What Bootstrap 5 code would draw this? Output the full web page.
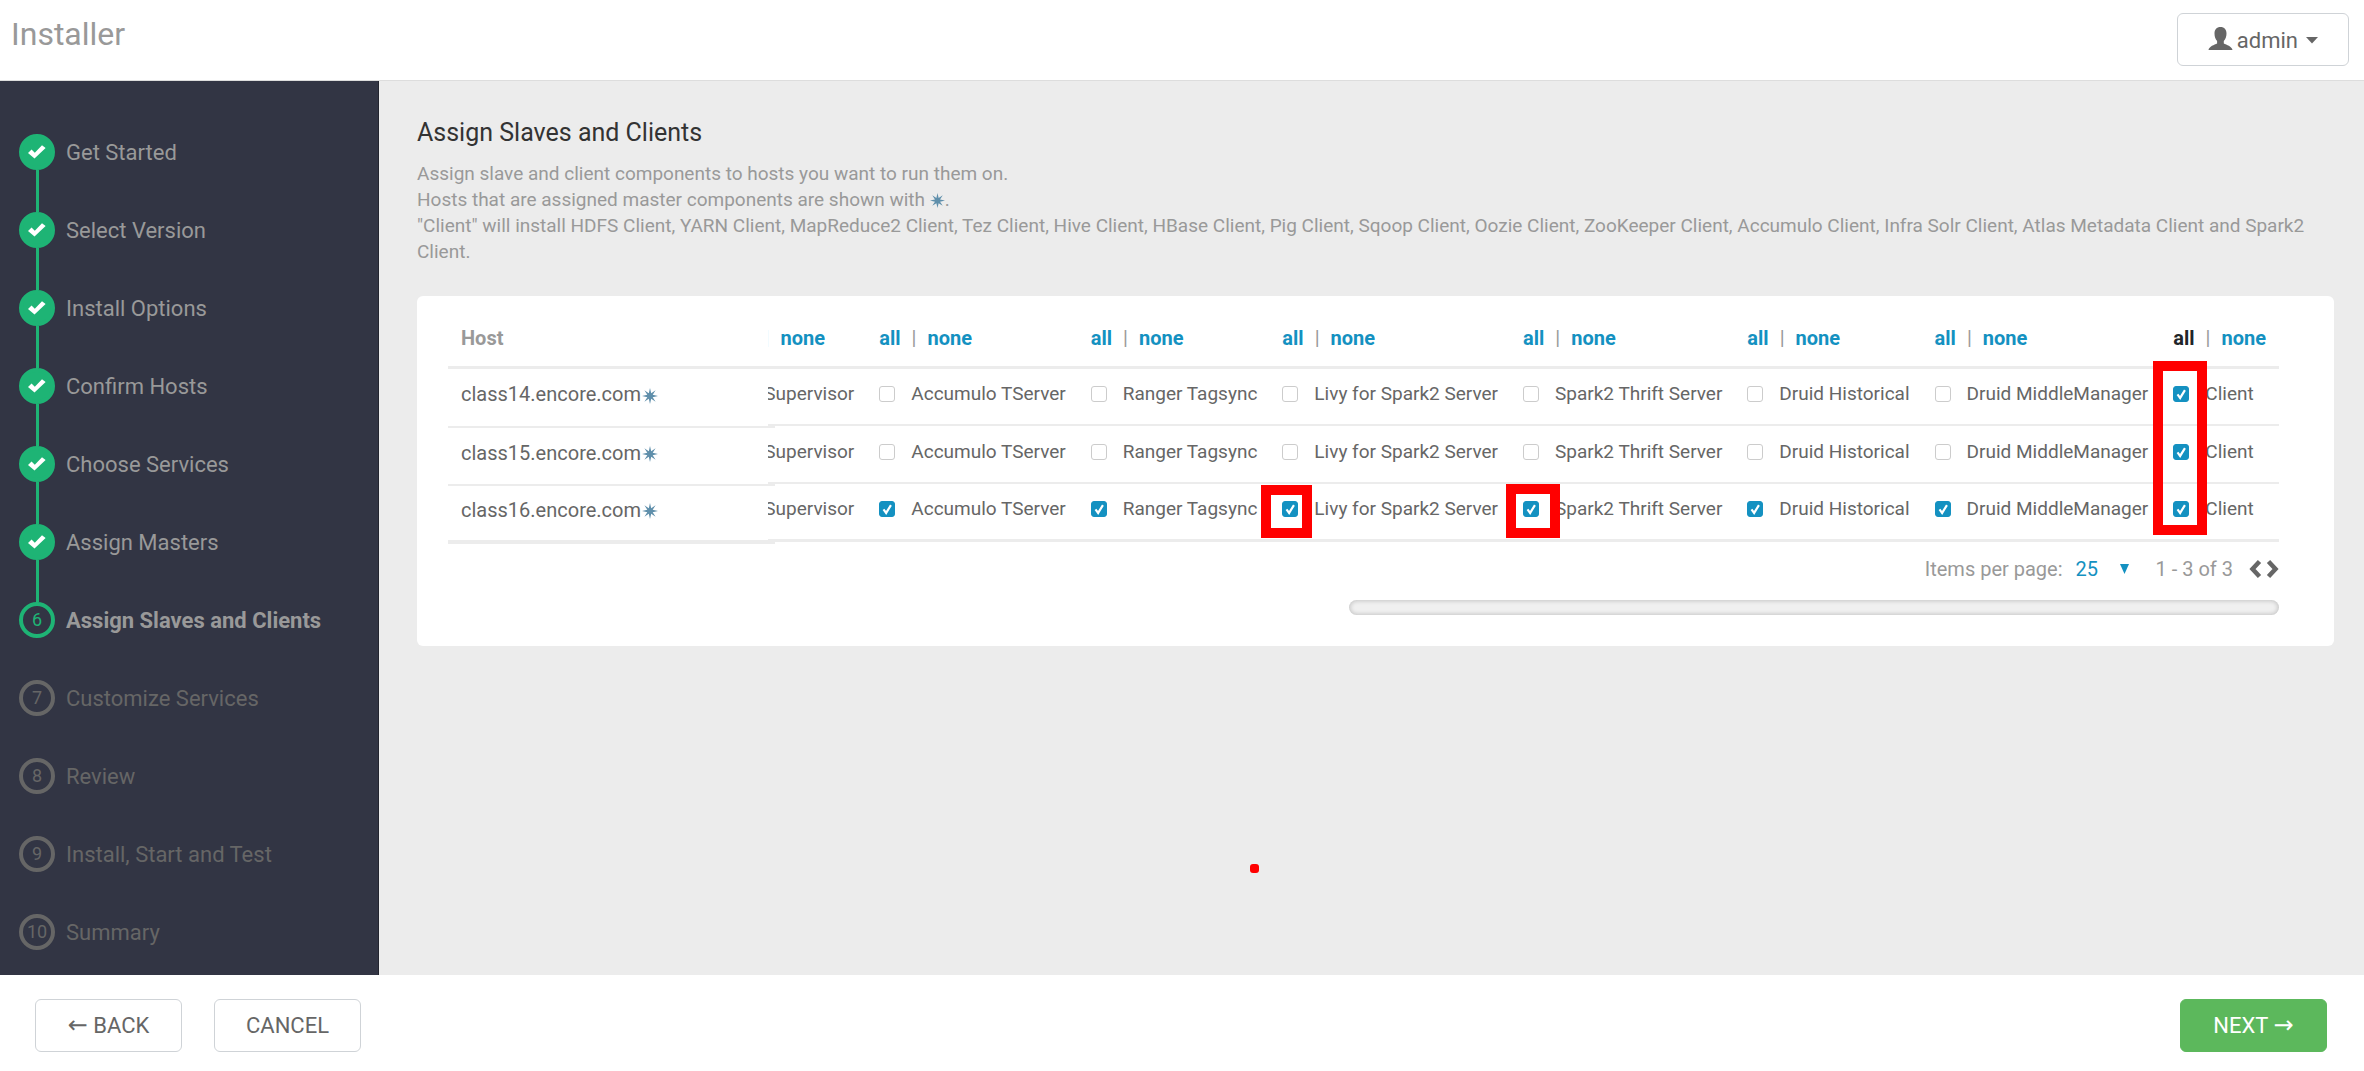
<!DOCTYPE html>
<html lang="en">
<head>
<meta charset="utf-8">
<meta name="viewport" content="width=device-width, initial-scale=1">
<title>Installer</title>
<link rel="stylesheet" href="https://cdn.jsdelivr.net/npm/bootstrap@5.3.0/dist/css/bootstrap.min.css">
<style>
  body { font-family: Roboto, "Liberation Sans", sans-serif; font-size: 19px; line-height: 26px; color: #666; background: #ececec; }
  a { color: #1491c1; text-decoration: none; }
  .topbar { min-height: 81px; background: #fff; border-bottom: 1px solid #ddd; padding: 13px 15px 0 11px; }
  .brand-title { font-size: 32px; line-height: 42px; font-weight: 400; color: #999; }
  .btn-tool { --bs-btn-font-size: 22px; --bs-btn-line-height: 30px; --bs-btn-border-radius: 6px; --bs-btn-border-color: #cfd3d7;
    --bs-btn-color: #666; --bs-btn-bg: #fff; --bs-btn-padding-x: 30px; height: 53px; min-width: 147px; }
  .btn-user { padding-top: 8px; }
  .btn-go { --bs-btn-color: #fff; --bs-btn-bg: #5cb85c; --bs-btn-border-color: #5cb85c; }
  .arrow { font-family: "DejaVu Sans", sans-serif; font-size: 24px; line-height: 1; }
  .sidebar { width: 379px; background: #323544; border-right: 1px solid #23252f; padding: 53px 0 23px 19px; }
  .step { height: 78px; gap: 11px; font-size: 22px; line-height: 38px; color: #666; }
  .step:last-child { height: auto; }
  .step a, .step.current { color: #999; }
  .bullet { width: 36px; height: 36px; flex: none; border: 4px solid #666; border-radius: 50%; font-size: 18px; color: #666; }
  .current .bullet { border-color: #1eb475; color: #1eb475; }
  .done .bullet { border-color: #1eb475; background: #1eb475; }
  .rail { width: 3px; flex: 1; background: #1eb475; }
  .content-area { padding: 37px 30px 36px 38px; min-width: 0; }
  .page-title { font-size: 25px; line-height: 30px; font-weight: 400; color: #333; margin-bottom: 13px; }
  .intro { color: #999; margin-bottom: 31px; }
  .panel { background: #fff; border-radius: 6px; padding: 12px 55px 31px 31px; }
  .grid-table { border-collapse: separate; border-spacing: 0; white-space: nowrap; }
  .grid-table th { height: 61px; padding: 2px 13px 0 12px; border-bottom: 3px solid #ececec; color: #999; font-size: 20px; text-align: left; }
  .grid-table td { height: 58px; padding: 0 13px 5px 12px; border-bottom: 2px solid #ececec; }
  .grid-table tr:first-child td { height: 57px; }
  .grid-table tr:last-child td { border-bottom-width: 3px; }
  .grid-table.hosts { width: 327px; margin-right: -7px; z-index: 1; }
  .grid-table.hosts th, .grid-table.hosts td { padding-left: 13px; }
  .grid-table.hosts td { font-size: 20px; padding-bottom: 7px; }
  .grid-table.hosts tr:first-child td { height: 59px; }
  .grid-table.hosts tr:last-child td { border-bottom-width: 4px; }
  .bar { font-weight: 400; margin: 0 11px; }
  .form-check-input.tick { width: 16px; height: 16px; margin: 0; border: 1px solid #ccc; border-radius: 3px; flex: none; }
  .form-check-input.tick:checked { background-color: #1491c1; border-color: #1491c1;
    background-image: url("data:image/svg+xml,%3Csvg xmlns='http://www.w3.org/2000/svg' viewBox='0 0 16 16'%3E%3Cpath d='M4 8.500l3 4L12.500 3.500' fill='none' stroke='%23fff' stroke-width='2.500'/%3E%3C/svg%3E"); }
  .tick-label { gap: 16px; }
  .pager { height: 49px; margin-bottom: 7px; color: #999; font-size: 20px; }
  .pager-size { appearance: none; border: 0; color: #1491c1; padding: 0; width: 53px; margin: 0 27px 0 13px;
    background: url("data:image/svg+xml,%3Csvg xmlns='http://www.w3.org/2000/svg' width='9' height='10'%3E%3Cpath d='M0 0h9l-4.500 10z' fill='%231491c1'/%3E%3C/svg%3E") no-repeat right center; }
  .pager-step { border: 0; background: none; padding: 0; line-height: 0; }
  .thumb { height: 15px; width: 50.8%; border-radius: 8px; background: #f0f0f0; box-shadow: inset 0 0 4px 1px rgba(0,0,0,.18); }
  .marker { position: absolute; z-index: 2; border: 10px solid #f00; pointer-events: none; }
  .marker-livy { left: -21px; top: -11px; width: 51px; height: 53px; }
  .marker-thrift { left: -17px; top: -12px; width: 54px; height: 54px; }
  .marker-client { left: -20px; top: -20px; width: 54px; height: 174px; }
  .dot { position: absolute; left: 1250px; top: 864px; width: 9px; height: 9px; border-radius: 3px; background: #f00; }
  .footer-bar { height: 96px; background: #fff; padding: 24px 37px 0 35px; gap: 32px; }
</style>
</head>
<body class="d-flex flex-column min-vh-100">
<svg width="0" height="0" class="position-absolute">
  <symbol id="check" viewBox="0 0 18 14"><path d="M0 8l3.500-3.500 3.300 3.200L14 .3 17.600 3 6.500 13.600z" fill="#fff"/></symbol>
  <symbol id="star" viewBox="0 0 16 16"><path d="M8 0l1.200 5.200 4.400-2.900-2.900 4.500L16 8l-5.300 1.200 2.900 4.500-4.400-2.900L8 16l-1.200-5.200-4.400 2.900 2.900-4.500L0 8l5.300-1.200-2.900-4.500 4.400 2.900z" fill="#5f8fab"/></symbol>
</svg>

<header class="topbar d-flex justify-content-between align-items-start">
  <h1 class="brand-title mb-0">Installer</h1>
  <button type="button" class="btn btn-tool btn-user d-flex align-items-center">
    <svg class="me-1 mb-1" width="25" height="24" viewBox="0 0 25 24"><path d="M12.500 0c3.800 0 6 2.600 6 6.500 0 3-1 5.800-2.700 7.400v2.500c2.600 1.300 8.200 2.800 8.700 6.600H.5c.5-3.800 6-5.300 8.600-6.600v-2.500C7.400 12.300 6.500 9.500 6.500 6.500c0-3.900 2.200-6.500 6-6.500z" fill="#666"/></svg>
    <span>admin</span>
    <svg class="ms-2" width="12" height="7" viewBox="0 0 12 7"><path d="M0 0h12L6 6.500z" fill="#666"/></svg>
  </button>
</header>

<div class="d-flex flex-grow-1">
  <nav class="sidebar flex-shrink-0" id="steps"></nav>
  <main class="content-area flex-grow-1">
    <h2 class="page-title">Assign Slaves and Clients</h2>
    <p class="intro">Assign slave and client components to hosts you want to run them on.<br>
      Hosts that are assigned master components are shown with <svg width="15" height="15"><use href="#star"/></svg>.<br>
      "Client" will install HDFS Client, YARN Client, MapReduce2 Client, Tez Client, Hive Client, HBase Client, Pig Client, Sqoop Client, Oozie Client, ZooKeeper Client, Accumulo Client, Infra Solr Client, Atlas Metadata Client and Spark2 Client.</p>

    <section class="panel">
      <div class="d-flex align-items-start">
        <table class="grid-table hosts position-relative flex-shrink-0">
          <thead><tr><th>Host</th></tr></thead>
          <tbody id="hostRows"></tbody>
        </table>
        <div class="d-flex justify-content-end flex-grow-1 overflow-hidden">
          <table class="grid-table flex-shrink-0">
            <thead><tr id="headRow"></tr></thead>
            <tbody id="bodyRows"></tbody>
          </table>
        </div>
      </div>
      <div class="pager d-flex align-items-center justify-content-end">
        <label for="pageSize">Items per page:</label>
        <select id="pageSize" class="pager-size"><option>25</option><option>50</option><option>100</option></select>
        <span class="me-3">1 - 3 of 3</span>
        <button type="button" class="pager-step me-1" aria-label="Previous page"><svg width="13" height="20" viewBox="0 0 13 20"><path d="M10.500 2.500L3.500 10l7 7.500" fill="none" stroke="#666" stroke-width="4.500"/></svg></button>
        <button type="button" class="pager-step" aria-label="Next page"><svg width="13" height="20" viewBox="0 0 13 20"><path d="M2.500 2.500l7 7.500-7 7.500" fill="none" stroke="#666" stroke-width="4.500"/></svg></button>
      </div>
      <div class="thumb ms-auto"></div>
    </section>
  </main>
</div>

<footer class="footer-bar d-flex align-items-start">
  <button type="button" class="btn btn-tool px-0"><span class="arrow">←</span> BACK</button>
  <button type="button" class="btn btn-tool px-0">CANCEL</button>
  <button type="button" class="btn btn-tool btn-go px-0 ms-auto">NEXT <span class="arrow">→</span></button>
</footer>
<div class="dot"></div>

<script>
  const steps = ['Get Started', 'Select Version', 'Install Options', 'Confirm Hosts', 'Choose Services', 'Assign Masters',
    'Assign Slaves and Clients', 'Customize Services', 'Review', 'Install, Start and Test', 'Summary'];
  const current = 6;
  document.getElementById('steps').innerHTML = steps.map((name, i) => {
    const done = i < current;
    const bullet = done ? '<svg width="18" height="14"><use href="#check"/></svg>' : i;
    const label = done ? `<a href="#">${name}</a>` : `<span>${name}</span>`;
    return `<div class="step d-flex ${done ? 'done' : i === current ? 'current fw-bold' : ''}">
      <div class="d-flex flex-column align-items-center"><div class="bullet d-flex align-items-center justify-content-center fw-normal">${bullet}</div>
      ${done ? '<div class="rail"></div>' : ''}</div>${label}</div>`;
  }).join('');

  const hosts = ['class14.encore.com', 'class15.encore.com', 'class16.encore.com'];
  const components = ['Supervisor', 'Accumulo TServer', 'Ranger Tagsync', 'Livy for Spark2 Server', 'Spark2 Thrift Server',
    'Druid Historical', 'Druid MiddleManager', 'Client'];
  const markers = { '2-3': 'marker-livy', '2-4': 'marker-thrift', '0-7': 'marker-client' };
  document.getElementById('hostRows').innerHTML = hosts.map(h =>
    `<tr><td>${h}<svg width="18" height="16"><use href="#star"/></svg></td></tr>`).join('');
  document.getElementById('headRow').innerHTML = components.map(c =>
    `<th><a href="#"${c === 'Client' ? ' class="text-dark"' : ''}>all</a><span class="bar">|</span><a href="#">none</a></th>`).join('');
  document.getElementById('bodyRows').innerHTML = hosts.map((h, r) => '<tr>' + components.map((c, i) => {
    const id = `c${r}-${i}`, mark = markers[`${r}-${i}`];
    return `<td><div class="tick-label d-flex align-items-center position-relative">
      <input type="checkbox" class="form-check-input tick" id="${id}"${r === 2 || c === 'Client' ? ' checked' : ''}>
      <label for="${id}">${c}</label>${mark ? `<span class="marker ${mark}"></span>` : ''}</div></td>`;
  }).join('') + '</tr>').join('');
</script>
<script src="https://cdn.jsdelivr.net/npm/bootstrap@5.3.0/dist/js/bootstrap.bundle.min.js"></script>
</body>
</html>
